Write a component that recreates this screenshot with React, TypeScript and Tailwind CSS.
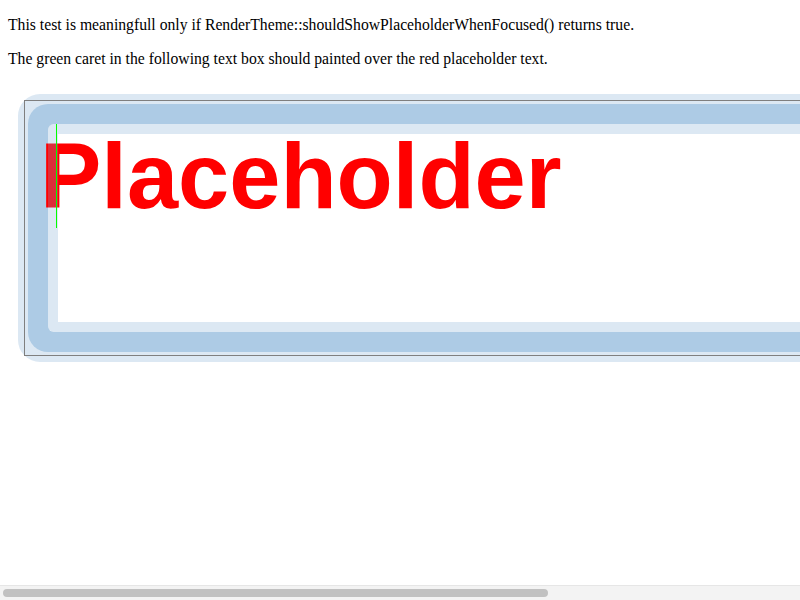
import React from "react";

export default function App() {
  return (
    <div className="w-[800px] h-[600px] bg-white flex flex-col overflow-hidden">
      <div className="flex-1 overflow-hidden px-2 text-black text-[15.7px]" style={{ fontFamily: '"Liberation Serif", "Times New Roman", serif' }}>
        <p className="mt-4 leading-[18px] whitespace-nowrap">
          This test is meaningfull only if RenderTheme::shouldShowPlaceholderWhenFocused() returns true.
        </p>
        <p className="mt-4 leading-[18px] whitespace-nowrap">
          The green caret in the following text box should painted over the red placeholder text.
        </p>
        <div className="relative mt-[32px] ml-4 w-[1100px] h-[256px] border border-transparent">
          {/* focus ring layers */}
          <div className="absolute -inset-[7px] rounded-[22px] bg-[#dce8f3] p-[10px] z-0">
            <div className="h-full rounded-[20px] bg-[#adcbe5] p-[20px]">
              <div className="h-full rounded-[6px] bg-white" />
            </div>
          </div>
          {/* placeholder text */}
          <div
            className="relative z-10 pl-[15px] pt-[23px] text-[92px] leading-[104px] font-bold text-[#ff0000] whitespace-nowrap"
            style={{ fontFamily: '"Liberation Sans", Arial, sans-serif' }}
          >
            Placeholder
          </div>
          {/* inner translucent band over text */}
          <div className="absolute inset-x-[23px] top-[23px] bottom-[23px] -right-[7px] z-20 rounded-[6px] border-[10px] border-[rgba(127,171,211,0.27)] pointer-events-none" />
          {/* input border */}
          <div className="absolute -inset-px z-20 border border-[#7f7f7f] pointer-events-none" />
          {/* caret */}
          <div className="absolute left-[31px] top-[23px] w-px h-[104px] bg-[#00ff00] z-30" />
        </div>
      </div>
      <div className="h-[15px] shrink-0 border-t border-[#e6e6e6] bg-[#f3f3f3] flex items-center px-[3px]">
        <div className="h-[8px] w-[545px] rounded-full bg-[#c1c1c1]" />
      </div>
    </div>
  );
}
